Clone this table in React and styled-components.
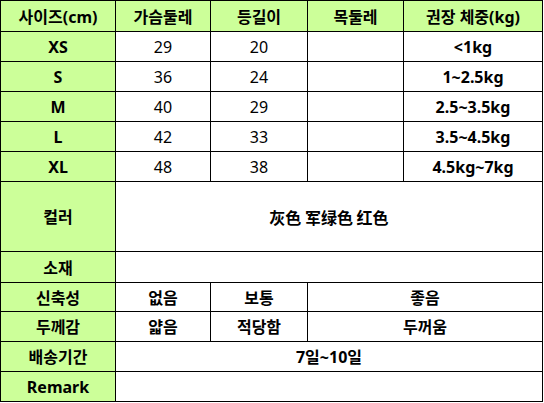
import { Fragment } from "react";
import styled, { createGlobalStyle } from "styled-components";

const GlobalStyle = createGlobalStyle`
  html, body {
    margin: 0;
    padding: 0;
    background: #ffffff;
  }
  body {
    font-family: "Noto Sans", "Noto Sans CJK KR", sans-serif;
  }
`

const Table = styled.div`
  display: grid;
  grid-template-columns: 114px 94px 96px 95px 138px;
  grid-template-rows: 30px 29px 29px 29px 29px 29px 69px 30px 28px 29px 29px 29px;
  gap: 1px;
  padding: 1px;
  width: max-content;
  background-color: #000000;
`

const Cell = styled.div`
  display: flex;
  justify-content: center;
  align-items: center;
  padding-top: 1px;
  background-color: ${props => props.head ? '#ccff99' : '#ffffff'};
  grid-column: ${props => props.span ? `span ${props.span}` : 'auto'};
  font-family: ${props => props.zh
    ? '"Noto Sans CJK SC", "Noto Sans", sans-serif'
    : '"Noto Sans", "Noto Sans CJK KR", sans-serif'};
  font-size: 16px;
  font-weight: ${props => props.light ? 400 : 700};
  color: #000000;
  white-space: nowrap;
  line-height: 1;
`

const sizes = [
    {size: 'XS', chest: '29', back: '20', weight: '<1kg'},
    {size: 'S', chest: '36', back: '24', weight: '1~2.5kg'},
    {size: 'M', chest: '40', back: '29', weight: '2.5~3.5kg'},
    {size: 'L', chest: '42', back: '33', weight: '3.5~4.5kg'},
    {size: 'XL', chest: '48', back: '38', weight: '4.5kg~7kg'},
]

const App = () => {
    return (
        <>
            <GlobalStyle/>
            <Table>
                <Cell head>사이즈(cm)</Cell>
                <Cell head>가슴둘레</Cell>
                <Cell head>등길이</Cell>
                <Cell head>목둘레</Cell>
                <Cell head>권장 체중(kg)</Cell>

                {sizes.map((row) => (
                    <Fragment key={row.size}>
                        <Cell head>{row.size}</Cell>
                        <Cell light>{row.chest}</Cell>
                        <Cell light>{row.back}</Cell>
                        <Cell></Cell>
                        <Cell>{row.weight}</Cell>
                    </Fragment>
                ))}

                <Cell head>컬러</Cell>
                <Cell span={4} zh>灰色 军绿色 红色</Cell>

                <Cell head>소재</Cell>
                <Cell span={4}></Cell>

                <Cell head>신축성</Cell>
                <Cell>없음</Cell>
                <Cell>보통</Cell>
                <Cell span={2}>좋음</Cell>

                <Cell head>두께감</Cell>
                <Cell>얇음</Cell>
                <Cell>적당함</Cell>
                <Cell span={2}>두꺼움</Cell>

                <Cell head>배송기간</Cell>
                <Cell span={4}>7일~10일</Cell>

                <Cell head>Remark</Cell>
                <Cell span={4}></Cell>
            </Table>
        </>
    )
}

export default App
